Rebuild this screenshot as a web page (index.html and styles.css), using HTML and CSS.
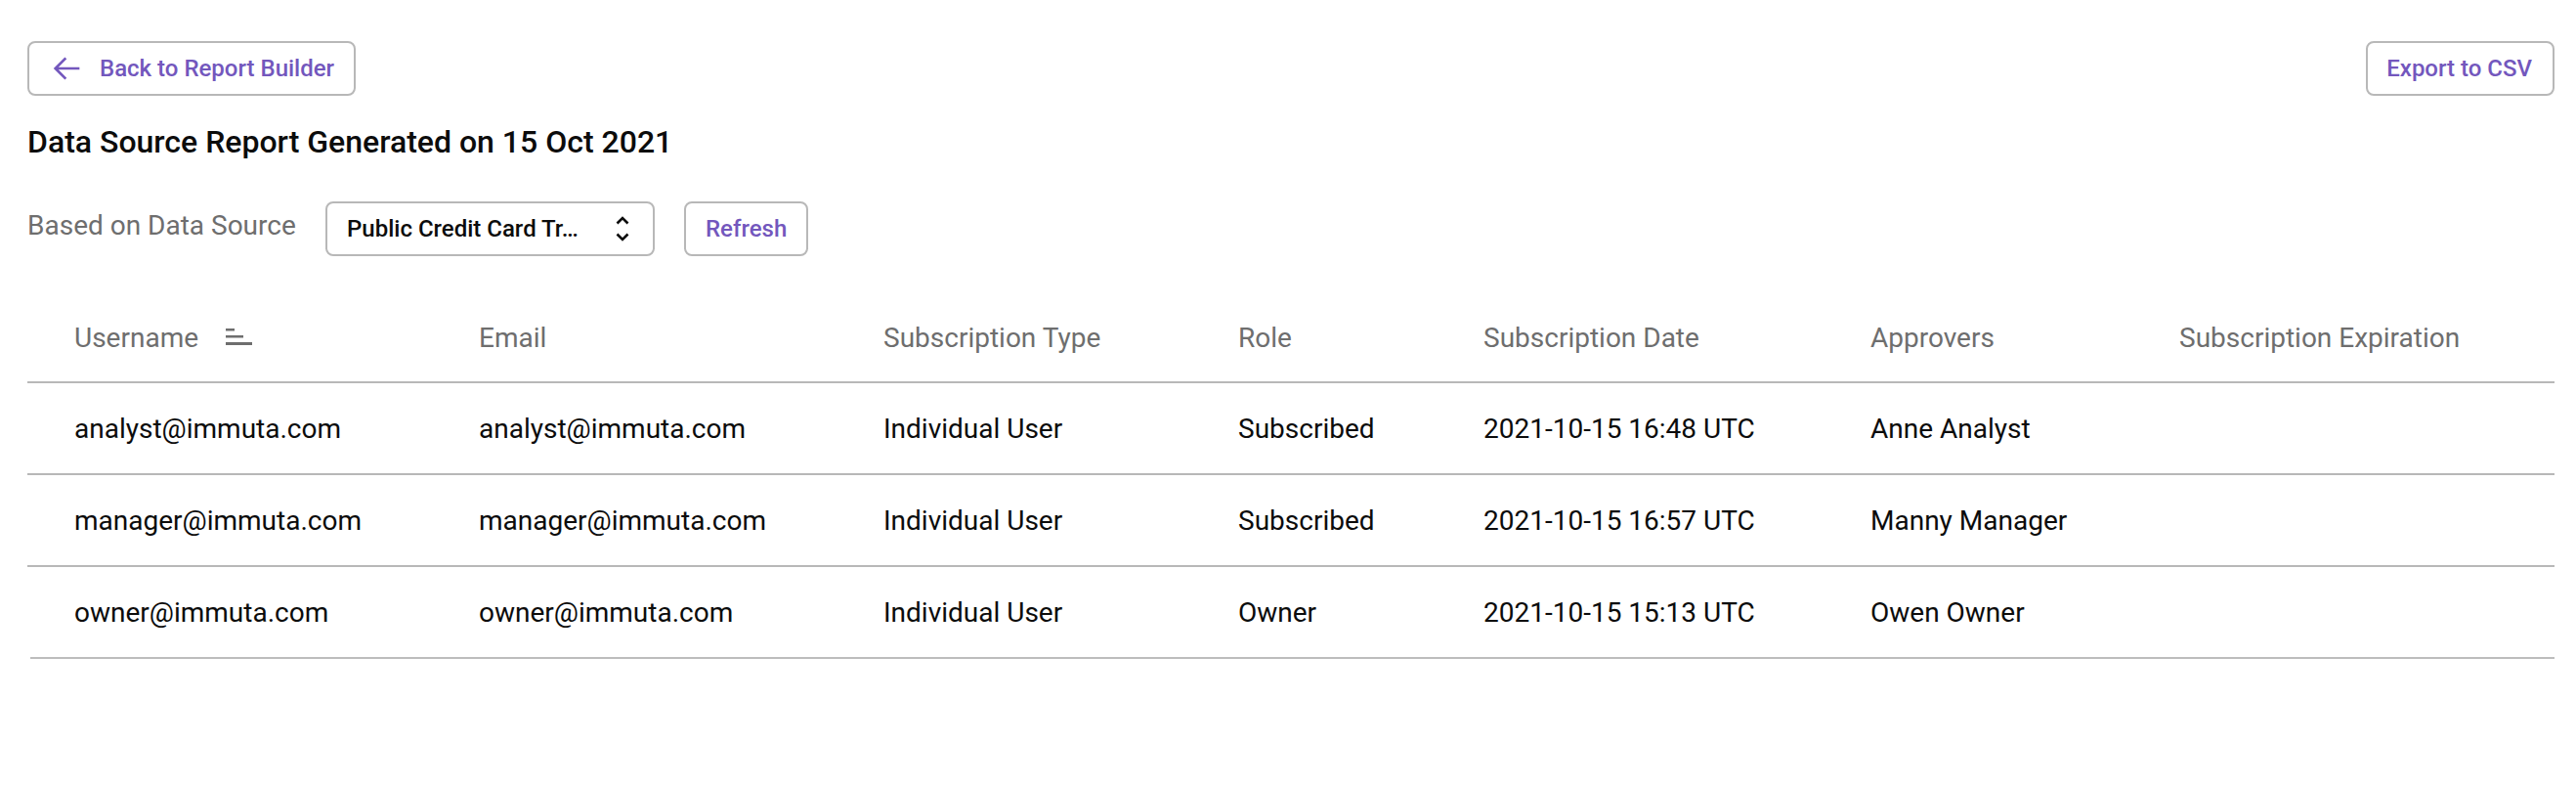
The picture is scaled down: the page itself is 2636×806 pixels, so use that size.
FILE: index.html
```html
<!DOCTYPE html>
<html lang="en">
<head>
<meta charset="utf-8">
<title>Data Source Report</title>
<link rel="stylesheet" href="styles.css">
</head>
<body>
<main class="page">
  <div class="top-bar">
    <button class="btn btn-back">
      <svg class="arrow" viewBox="0 0 24 24" width="32" height="32" fill="none" stroke="currentColor" stroke-width="2"><path d="M22 12H3.500M11.500 4 3.500 12l8 8"/></svg>
      Back to Report Builder
    </button>
    <button class="btn btn-export">Export to CSV</button>
  </div>
  <h1 class="title">Data Source Report Generated on 15 Oct 2021</h1>
  <div class="filter-row">
    <span class="filter-label">Based on Data Source</span>
    <div class="select">
      <span class="select-value">Public Credit Card Tr…</span>
      <svg class="chevrons" viewBox="0 0 14 28" width="14" height="28" fill="none" stroke="currentColor" stroke-width="2.600"><path d="M1.500 8.500 7 3 12.500 8.500M1.500 19.500 7 25 12.500 19.500"/></svg>
    </div>
    <button class="btn btn-refresh">Refresh</button>
  </div>
  <table class="report">
    <thead>
      <tr>
        <th class="col-user"><span class="sort-head">Username
          <svg class="sort" viewBox="0 0 28 18" width="28" height="18" fill="currentColor"><rect x="0" y="0" width="9" height="2.500"/><rect x="0" y="7" width="18" height="2.500"/><rect x="0" y="14" width="27" height="3"/></svg></span></th>
        <th class="col-email">Email</th>
        <th class="col-type">Subscription Type</th>
        <th class="col-role">Role</th>
        <th class="col-date">Subscription Date</th>
        <th class="col-appr">Approvers</th>
        <th>Subscription Expiration</th>
      </tr>
    </thead>
    <tbody>
      <tr><td>analyst@immuta.com</td><td>analyst@immuta.com</td><td>Individual User</td><td>Subscribed</td><td>2021-10-15 16:48 UTC</td><td>Anne Analyst</td><td></td></tr>
      <tr><td>manager@immuta.com</td><td>manager@immuta.com</td><td>Individual User</td><td>Subscribed</td><td>2021-10-15 16:57 UTC</td><td>Manny Manager</td><td></td></tr>
      <tr><td>owner@immuta.com</td><td>owner@immuta.com</td><td>Individual User</td><td>Owner</td><td>2021-10-15 15:13 UTC</td><td>Owen Owner</td><td></td></tr>
    </tbody>
  </table>
  <div class="table-end"></div>
</main>
</body>
</html>
```
FILE: styles.css
```css
* { box-sizing: border-box; }
html, body { margin: 0; background: #fff; }
body { font-family: Roboto, "Liberation Sans", sans-serif; color: #0c0c0c; }
.page { padding: 42px 22px 0 28px; }
.top-bar { display: flex; justify-content: space-between; align-items: center; }
.btn {
  height: 56px;
  border: 2px solid #b8b8b8;
  border-radius: 8px;
  background: #fff;
  color: #7357bd;
  font: 500 24px/1 Roboto, sans-serif;
  padding: 0 20px;
  display: inline-flex;
  align-items: center;
}
.btn-back { padding-left: 22px; gap: 18px; }
.btn-export { padding: 0 21px 0 19px; }
.title { margin: 28px 0 0; font-size: 32px; line-height: 38px; font-weight: 500; }
.filter-row { display: flex; align-items: flex-start; margin-top: 42px; }
.filter-label { font-size: 28px; line-height: 49px; color: #6e6e6e; width: 305px; }
.select {
  width: 337px; height: 56px;
  border: 2px solid #b8b8b8; border-radius: 8px;
  display: flex; align-items: center; justify-content: space-between;
  padding: 0 24px 0 20px;
  font-size: 24px; font-weight: 500;
}
.btn-refresh { margin-left: 30px; }
.report { width: 100%; border-collapse: collapse; table-layout: fixed; margin-top: 35px; }
.report th, .report td { padding: 0 0 0 48px; text-align: left; font-size: 28px; white-space: nowrap; }
.report th { height: 94px; padding-top: 3px; font-weight: 400; color: #6e6e6e; border-bottom: 2px solid #b8b8b8; }
.report td { height: 94px; border-bottom: 2px solid #b8b8b8; }
.report tbody tr:last-child td { height: 93px; padding-top: 1px; border-bottom: 0; }
.col-user, .col-email { width: 414px; }
.col-type { width: 363px; }
.col-role { width: 251px; }
.col-date { width: 396px; }
.col-appr { width: 316px; }
.sort-head { display: inline-flex; align-items: center; gap: 28px; }
.sort { color: #6e6e6e; }
.table-end { height: 2px; margin-left: 3px; background: #bdbdbd; }
```
